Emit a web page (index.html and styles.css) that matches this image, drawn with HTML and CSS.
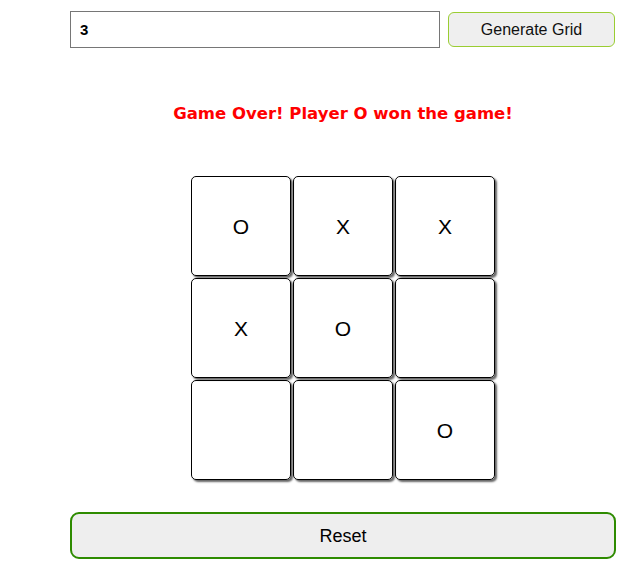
FILE: index.html
```html
<!DOCTYPE html>
<html>
<head>
<meta charset="utf-8">
<link rel="stylesheet" href="styles.css">
</head>
<body>
<div class="app">
  <div class="controls">
    <input class="size-input" type="text" value="3">
    <button class="gen-btn">Generate Grid</button>
  </div>
  <p class="status">Game Over! Player O won the game!</p>
  <div class="board">
    <div class="cell">O</div>
    <div class="cell">X</div>
    <div class="cell">X</div>
    <div class="cell">X</div>
    <div class="cell">O</div>
    <div class="cell"></div>
    <div class="cell"></div>
    <div class="cell"></div>
    <div class="cell">O</div>
  </div>
  <button class="reset-btn">Reset</button>
</div>
</body>
</html>
```
FILE: styles.css
```css
html, body { margin: 0; padding: 0; background: #fff; }
body { font-family: "Liberation Sans", Arial, sans-serif; }
.app { width: 546px; margin-left: 70px; padding-top: 11px; }
.controls { display: flex; gap: 8px; align-items: flex-start; }
.size-input {
  box-sizing: border-box; width: 370px; height: 37px; margin: 0;
  border: 1px solid #767676; padding: 0 9px;
  font: bold 15px "Liberation Sans", Arial, sans-serif; color: #000; outline: none;
}
.gen-btn {
  box-sizing: border-box; width: 167px; height: 35px; margin: 1px 0 0 0;
  background: #efefef; border: 1px solid #9acd32; border-radius: 6px;
  font: 16px "Liberation Sans", Arial, sans-serif; color: #111;
}
.status {
  margin: 55px 0 0 0; text-align: center; color: #ff0000;
  font: bold 16.5px "DejaVu Sans", Verdana, sans-serif; line-height: 22px;
}
.board {
  display: grid; grid-template-columns: repeat(3, 100px); gap: 2px;
  width: max-content; margin: 51px auto 0;
}
.cell {
  box-sizing: border-box; width: 100px; height: 100px; padding-top: 2px;
  border: 1px solid #000; border-radius: 5px; box-shadow: 2px 2px 2px #666;
  display: flex; align-items: center; justify-content: center;
  font: 21px "Liberation Sans", Arial, sans-serif; color: #000;
}
.reset-btn {
  display: block; box-sizing: border-box; width: 546px; height: 47px; margin: 32px 0 0 0;
  padding-top: 2px;
  background: #eeeeee; border: 2px solid #2e8b00; border-radius: 9px;
  font: 18px "Liberation Sans", Arial, sans-serif; color: #000;
}
```
